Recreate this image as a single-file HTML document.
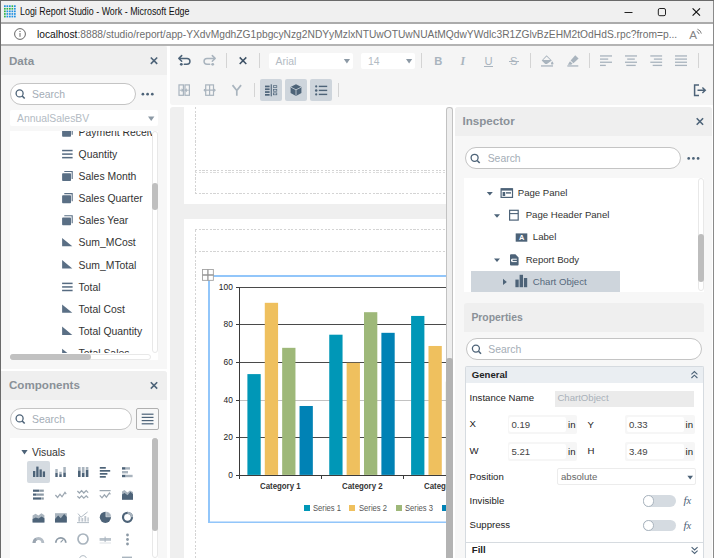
<!DOCTYPE html>
<html><head><meta charset="utf-8"><title>Logi Report Studio - Work</title>
<style>
*{box-sizing:border-box;margin:0;padding:0}
html,body{width:714px;height:558px;overflow:hidden;background:#fff;font-family:"Liberation Sans",Arial,sans-serif;font-size:10.4px;color:#333}
#win, #win div, #win svg, #win span.a{position:absolute}
#win{left:0;top:0;width:714px;height:558px;overflow:hidden;background:#fff}
.t{white-space:nowrap}
#win svg{overflow:visible;display:block}
.clip{overflow:hidden}
</style></head><body>
<div id="win">
<div style="left:0px;top:0px;width:714px;height:22px;background:#f0f0f0;"></div>
<div style="left:0px;top:22px;width:714px;height:2px;background:#ababab;"></div>
<div style="left:0px;top:24px;width:714px;height:20px;background:#fff;"></div>
<div style="left:0px;top:44px;width:714px;height:2px;background:#b4b4b4;"></div>
<svg style="left:0px;top:0px" width="20" height="22" viewBox="0 0 20 22"><rect x="4.00" y="5.30" width="1.7" height="1.7" fill="#1e8fe1"/><rect x="4.00" y="7.90" width="1.7" height="1.7" fill="#2cb34a"/><rect x="4.00" y="10.50" width="1.7" height="1.7" fill="#2cb34a"/><rect x="4.00" y="13.10" width="1.7" height="1.7" fill="#2cb34a"/><rect x="4.00" y="15.70" width="1.7" height="1.7" fill="#2cb34a"/><rect x="6.50" y="5.30" width="1.7" height="1.7" fill="#1e8fe1"/><rect x="6.50" y="7.90" width="1.7" height="1.7" fill="#2cb34a"/><rect x="6.50" y="10.50" width="1.7" height="1.7" fill="#1e8fe1"/><rect x="6.50" y="13.10" width="1.7" height="1.7" fill="#1e8fe1"/><rect x="6.50" y="15.70" width="1.7" height="1.7" fill="#1e8fe1"/><rect x="9.00" y="5.30" width="1.7" height="1.7" fill="#1e8fe1"/><rect x="9.00" y="7.90" width="1.7" height="1.7" fill="#2cb34a"/><rect x="9.00" y="10.50" width="1.7" height="1.7" fill="#1e8fe1"/><rect x="9.00" y="13.10" width="1.7" height="1.7" fill="#1e8fe1"/><rect x="9.00" y="15.70" width="1.7" height="1.7" fill="#1e8fe1"/><rect x="11.50" y="5.30" width="1.7" height="1.7" fill="#2cb34a"/><rect x="11.50" y="7.90" width="1.7" height="1.7" fill="#2cb34a"/><rect x="11.50" y="10.50" width="1.7" height="1.7" fill="#1e8fe1"/><rect x="11.50" y="13.10" width="1.7" height="1.7" fill="#1e8fe1"/><rect x="11.50" y="15.70" width="1.7" height="1.7" fill="#1e8fe1"/><rect x="14.00" y="5.30" width="1.7" height="1.7" fill="#1e8fe1"/><rect x="14.00" y="7.90" width="1.7" height="1.7" fill="#1e8fe1"/><rect x="14.00" y="10.50" width="1.7" height="1.7" fill="#1e8fe1"/><rect x="14.00" y="13.10" width="1.7" height="1.7" fill="#1e8fe1"/><rect x="14.00" y="15.70" width="1.7" height="1.7" fill="#1e8fe1"/></svg>
<div class="t" id="title" style="left:20px;top:5.24px;font-size:10px;line-height:13px;height:13px;color:#111;transform:scaleX(0.89);transform-origin:0 0;">Logi Report Studio - Work - Microsoft Edge</div>
<svg style="left:0px;top:0px" width="714" height="22" viewBox="0 0 714 22"><path d="M624.5 12.5h8" stroke="#222" stroke-width="1" fill="none"/><rect x="658.3" y="8.5" width="7.2" height="7.2" rx="1.5" fill="none" stroke="#222" stroke-width="1"/><path d="M692.6 8.3l7.4 7.4M700 8.3l-7.4 7.4" stroke="#111" stroke-width="1.15" fill="none"/></svg>
<svg style="left:0px;top:24px" width="40" height="20" viewBox="0 0 40 20"><circle cx="20" cy="10" r="5.4" fill="none" stroke="#555" stroke-width="0.9"/><rect x="19.55" y="9" width="0.9" height="3.8" fill="#555"/><rect x="19.5" y="6.9" width="1" height="1.1" fill="#555"/></svg>
<div class="t" id="url" style="left:37px;top:26.73px;font-size:10.6px;line-height:14px;height:14px;color:#6d6d6d;transform:scaleX(0.967);transform-origin:0 0;"><span style="color:#111">localhost</span>:8888/studio/report/app-YXdvMgdhZG1pbgcyNzg2NDYyMzlxNTUwOTUwNUAtMQdwYWdlc3R1ZGlvBzEHM2tOdHdS.rpc?from=p...</div>
<div class="t" style="left:689.3px;top:26.6px;font-size:11.6px;line-height:15px;color:#858585">A</div>
<svg style="left:0px;top:24px" width="714" height="20" viewBox="0 0 714 20"><path d="M696.71 7.38A3.6 3.6 0 0 1 699.12 10.05M697.42 5.19A5.9 5.9 0 0 1 701.37 9.57" fill="none" stroke="#808080" stroke-width="1"/></svg>
<div style="left:1px;top:46px;width:166px;height:323px;background:#f7f7f7;"></div>
<div style="left:1px;top:371.3px;width:166px;height:187px;background:#f7f7f7;border-radius:0 3px 0 0;"></div>
<div style="left:1px;top:46px;width:166px;height:28.5px;background:#efefef;border-radius:0 3px 0 0;"></div>
<div class="t" style="left:9px;top:52.58px;font-size:11.6px;line-height:15px;height:15px;color:#8a9198;font-weight:bold;">Data</div>
<svg style="left:0px;top:0px" width="714" height="558" viewBox="0 0 714 558"><path d="M150.8 57.5L157.2 63.900000000000006M157.2 57.5L150.8 63.900000000000006" stroke="#4d6378" stroke-width="1.6" fill="none"/></svg>
<div style="left:10px;top:83px;width:126px;height:22px;background:#fff;border:1px solid #c4c4c4;border-radius:11.0px;"></div>
<svg style="left:0px;top:0px" width="714" height="558" viewBox="0 0 714 558"><circle cx="19.6" cy="93.4" r="3.5" fill="none" stroke="#4d6378" stroke-width="1.3"/><path d="M22.2 96.0l2.5 2.6" stroke="#4d6378" stroke-width="1.5" fill="none"/></svg>
<div class="t" style="left:32px;top:87.90px;font-size:10.4px;line-height:14px;height:14px;color:#a4adb6;">Search</div>
<svg style="left:0px;top:0px" width="714" height="558" viewBox="0 0 714 558"><circle cx="142.9" cy="94.2" r="1.35" fill="#4d6378"/><circle cx="147.6" cy="94.2" r="1.35" fill="#4d6378"/><circle cx="152.3" cy="94.2" r="1.35" fill="#4d6378"/></svg>
<div style="left:10px;top:110px;width:148px;height:16px;background:#fff;border-radius:2px;"></div>
<div class="t" style="left:17px;top:112.00px;font-size:10.4px;line-height:14px;height:14px;color:#b3bbc3;">AnnualSalesBV</div>
<svg style="left:0px;top:0px" width="714" height="558" viewBox="0 0 714 558"><path d="M148 116.5h6.4l-3.2 4.6z" fill="#8c99a5"/></svg>
<div style="left:10px;top:131px;width:148px;height:229px;background:#fff;"></div>
<div class="clip" style="left:10px;top:131px;width:141.5px;height:222px">
<svg style="left:0px;top:0px" width="148" height="222" viewBox="0 0 148 222"><rect x="52.1" y="-2.14" width="8.9" height="7.9" rx="0.8" fill="#5a6f85"/><path d="M54.3 -3.84h7.9v7.6" fill="none" stroke="#5a6f85" stroke-width="1.1"/></svg>
<div class="t" style="left:68.6px;top:-5.34px;font-size:10.4px;line-height:14px;height:14px;color:#333;">Payment Received</div>
<svg style="left:0px;top:0px" width="148" height="222" viewBox="0 0 148 222"><rect x="52.1" y="18.80" width="10.5" height="1.5" fill="#566b81"/><rect x="52.1" y="22.35" width="10.5" height="1.5" fill="#566b81"/><rect x="52.1" y="25.90" width="10.5" height="1.5" fill="#566b81"/></svg>
<div class="t" style="left:68.6px;top:16.80px;font-size:10.4px;line-height:14px;height:14px;color:#333;">Quantity</div>
<svg style="left:0px;top:0px" width="148" height="222" viewBox="0 0 148 222"><rect x="52.1" y="42.14" width="8.9" height="7.9" rx="0.8" fill="#5a6f85"/><path d="M54.3 40.44h7.9v7.6" fill="none" stroke="#5a6f85" stroke-width="1.1"/></svg>
<div class="t" style="left:68.6px;top:38.94px;font-size:10.4px;line-height:14px;height:14px;color:#333;">Sales Month</div>
<svg style="left:0px;top:0px" width="148" height="222" viewBox="0 0 148 222"><rect x="52.1" y="64.28" width="8.9" height="7.9" rx="0.8" fill="#5a6f85"/><path d="M54.3 62.58h7.9v7.6" fill="none" stroke="#5a6f85" stroke-width="1.1"/></svg>
<div class="t" style="left:68.6px;top:61.08px;font-size:10.4px;line-height:14px;height:14px;color:#333;">Sales Quarter</div>
<svg style="left:0px;top:0px" width="148" height="222" viewBox="0 0 148 222"><rect x="52.1" y="86.42" width="8.9" height="7.9" rx="0.8" fill="#5a6f85"/><path d="M54.3 84.72h7.9v7.6" fill="none" stroke="#5a6f85" stroke-width="1.1"/></svg>
<div class="t" style="left:68.6px;top:83.22px;font-size:10.4px;line-height:14px;height:14px;color:#333;">Sales Year</div>
<svg style="left:0px;top:0px" width="148" height="222" viewBox="0 0 148 222"><path d="M52.1 106.96v8.4h10.2z" fill="#5a6f85"/></svg>
<div class="t" style="left:68.6px;top:105.36px;font-size:10.4px;line-height:14px;height:14px;color:#333;">Sum_MCost</div>
<svg style="left:0px;top:0px" width="148" height="222" viewBox="0 0 148 222"><path d="M52.1 129.10v8.4h10.2z" fill="#5a6f85"/></svg>
<div class="t" style="left:68.6px;top:127.50px;font-size:10.4px;line-height:14px;height:14px;color:#333;">Sum_MTotal</div>
<svg style="left:0px;top:0px" width="148" height="222" viewBox="0 0 148 222"><rect x="52.1" y="151.64" width="10.5" height="1.5" fill="#566b81"/><rect x="52.1" y="155.19" width="10.5" height="1.5" fill="#566b81"/><rect x="52.1" y="158.74" width="10.5" height="1.5" fill="#566b81"/></svg>
<div class="t" style="left:68.6px;top:149.64px;font-size:10.4px;line-height:14px;height:14px;color:#333;">Total</div>
<svg style="left:0px;top:0px" width="148" height="222" viewBox="0 0 148 222"><path d="M52.1 173.38v8.4h10.2z" fill="#5a6f85"/></svg>
<div class="t" style="left:68.6px;top:171.78px;font-size:10.4px;line-height:14px;height:14px;color:#333;">Total Cost</div>
<svg style="left:0px;top:0px" width="148" height="222" viewBox="0 0 148 222"><path d="M52.1 195.52v8.4h10.2z" fill="#5a6f85"/></svg>
<div class="t" style="left:68.6px;top:193.92px;font-size:10.4px;line-height:14px;height:14px;color:#333;">Total Quantity</div>
<svg style="left:0px;top:0px" width="148" height="222" viewBox="0 0 148 222"><path d="M52.1 217.66v8.4h10.2z" fill="#5a6f85"/></svg>
<div class="t" style="left:68.6px;top:216.06px;font-size:10.4px;line-height:14px;height:14px;color:#333;">Total Sales</div>
</div>
<div style="left:151.5px;top:131px;width:6.5px;height:221.5px;background:#fff;border:1px solid #e8e8e8;border-radius:3px;"></div>
<div style="left:151.5px;top:183px;width:6.5px;height:27px;background:#bfbfbf;border-radius:3px;"></div>
<div style="left:10px;top:353.5px;width:140.5px;height:6.5px;background:#fff;border:1px solid #e8e8e8;border-radius:3px;"></div>
<div style="left:10px;top:353.5px;width:80.5px;height:6.5px;background:#c1c1c1;border-radius:3px;"></div>
<div style="left:1px;top:371.3px;width:166px;height:28.7px;background:#efefef;border-radius:0 3px 0 0;"></div>
<div class="t" style="left:9px;top:377.08px;font-size:11.6px;line-height:15px;height:15px;color:#8a9198;font-weight:bold;">Components</div>
<svg style="left:0px;top:0px" width="714" height="558" viewBox="0 0 714 558"><path d="M150.8 382.2L157.2 388.59999999999997M157.2 382.2L150.8 388.59999999999997" stroke="#4d6378" stroke-width="1.6" fill="none"/></svg>
<div style="left:10px;top:408px;width:122px;height:22px;background:#fff;border:1px solid #c4c4c4;border-radius:11.0px;"></div>
<svg style="left:0px;top:0px" width="714" height="558" viewBox="0 0 714 558"><circle cx="19.6" cy="418.4" r="3.5" fill="none" stroke="#4d6378" stroke-width="1.3"/><path d="M22.2 421.0l2.5 2.6" stroke="#4d6378" stroke-width="1.5" fill="none"/></svg>
<div class="t" style="left:32px;top:412.90px;font-size:10.4px;line-height:14px;height:14px;color:#a4adb6;">Search</div>
<div style="left:136px;top:408px;width:22.5px;height:22px;background:#f8f8f8;border:1px solid #b0b0b0;border-radius:2px;"></div>
<svg style="left:0px;top:0px" width="714" height="558" viewBox="0 0 714 558"><rect x="141.7" y="413.6" width="11.8" height="1.2" fill="#4d6378"/><rect x="141.7" y="416.8" width="11.8" height="1.2" fill="#4d6378"/><rect x="141.7" y="420.0" width="11.8" height="1.2" fill="#4d6378"/><rect x="141.7" y="423.2" width="11.8" height="1.2" fill="#4d6378"/></svg>
<div style="left:10px;top:438px;width:148px;height:120px;background:#fff;"></div>
<div style="left:151.5px;top:438px;width:6.8px;height:120px;background:#fff;border:1px solid #e8e8e8;border-radius:3px;"></div>
<div style="left:151.5px;top:438px;width:6.8px;height:92.5px;background:#bdbdbd;border-radius:3px;"></div>
<svg style="left:0px;top:0px" width="714" height="558" viewBox="0 0 714 558"><path d="M21.4 450h6.2l-3.1 4.6z" fill="#4d6378"/></svg>
<div class="t" style="left:32px;top:446.00px;font-size:10.4px;line-height:14px;height:14px;color:#333;">Visuals</div>
<div style="left:27.3px;top:461px;width:22.3px;height:22px;background:#d5dbe1;border-radius:2px;"></div>
<svg style="left:0px;top:0px" width="714" height="558" viewBox="0 0 714 558"><g fill="#4d6378"><rect x="33" y="471" width="2.3" height="6"/><rect x="36.25" y="466.6" width="2.3" height="10.4"/><rect x="39.5" y="469.4" width="2.3" height="7.6"/><rect x="42.75" y="471.4" width="2.3" height="5.6"/></g></svg>
<svg style="left:0px;top:0px" width="714" height="558" viewBox="0 0 714 558"><g fill="#4d6378"><rect x="55.3" y="472.6" width="2.4" height="4.4"/><rect x="59.3" y="474.2" width="2.4" height="2.8"/><rect x="63.3" y="472.4" width="2.5" height="4.6"/></g><g fill="#a9b4be"><rect x="55.3" y="469" width="2.4" height="3.4"/><rect x="59.3" y="471.8" width="2.4" height="2.2"/><rect x="63.3" y="467" width="2.5" height="5.2"/></g></svg>
<svg style="left:0px;top:0px" width="714" height="558" viewBox="0 0 714 558"><g fill="#4d6378"><rect x="78" y="470.4" width="2.6" height="6.6"/><rect x="81.9" y="472.6" width="2.6" height="4.4"/><rect x="85.8" y="469.6" width="2.6" height="7.4"/></g><g fill="#a9b4be"><rect x="78" y="467" width="2.6" height="3.2"/><rect x="81.9" y="467" width="2.6" height="5.4"/><rect x="85.8" y="467" width="2.6" height="2.4"/></g></svg>
<svg style="left:0px;top:0px" width="714" height="558" viewBox="0 0 714 558"><g fill="#4d6378"><rect x="99.8" y="467" width="6" height="1.7"/><rect x="99.8" y="470" width="10.4" height="1.7"/><rect x="99.8" y="473" width="7.6" height="1.7"/><rect x="99.8" y="476" width="6" height="1.7"/></g></svg>
<svg style="left:0px;top:0px" width="714" height="558" viewBox="0 0 714 558"><g fill="#4d6378"><rect x="122" y="467.2" width="3.6" height="2.4"/><rect x="122" y="474.8" width="3.6" height="2.4"/></g><g fill="#a9b4be"><rect x="125.6" y="467.2" width="4.4" height="2.4"/><rect x="122" y="471" width="6" height="2.4"/><rect x="125.6" y="474.8" width="7" height="2.4"/></g></svg>
<svg style="left:0px;top:0px" width="714" height="558" viewBox="0 0 714 558"><g fill="#4d6378"><rect x="33" y="489.6" width="6.4" height="2.2"/><rect x="33" y="493.5" width="3.6" height="2.2"/><rect x="33" y="497.4" width="8" height="2.2"/></g><g fill="#8c99a5"><rect x="39.6" y="489.6" width="4.2" height="2.2"/><rect x="36.8" y="493.5" width="7" height="2.2"/><rect x="41.2" y="497.4" width="2.6" height="2.2"/></g></svg>
<svg style="left:0px;top:0px" width="714" height="558" viewBox="0 0 714 558"><path d="M55.4 495l2.2 2.4l2.4-3.2l2 2.6l3-4.4l1.2 1.6" fill="none" stroke="#9ca7b1" stroke-width="1.25"/></svg>
<svg style="left:0px;top:0px" width="714" height="558" viewBox="0 0 714 558"><path d="M77.4 491l2 2l2.2-2.4l2.2 2.4l2.4-2.4l2 2M77.4 496.2l2 2l2.2-2.4l2.2 2.4l2.4-2.4l2 2" fill="none" stroke="#9ca7b1" stroke-width="1.25"/></svg>
<svg style="left:0px;top:0px" width="714" height="558" viewBox="0 0 714 558"><path d="M99.6 490.6h11M99.8 495.4l2.2 2.4l2.4-3l2 2.4l3-4.2l1 1.4" fill="none" stroke="#9ca7b1" stroke-width="1.25"/></svg>
<svg style="left:0px;top:0px" width="714" height="558" viewBox="0 0 714 558"><path d="M122 491.6l2.4-1.6l3 2.4l2.6-2l3 1.6v7.6h-11z" fill="#a9b4be"/><path d="M122 494.4l2.6-1.4l3 2.2l2.8-3.4l2.6 2.4v5.6h-11z" fill="#4d6378"/></svg>
<svg style="left:0px;top:0px" width="714" height="558" viewBox="0 0 714 558"><path d="M32.6 515.4l3-1.6l2.8 1.8l3-2.4l3 2v7.2h-11.8z" fill="#a9b4be"/><path d="M32.6 519l3.2-1.6l2.8 1.2l3-2.2l2.8 1.8v4.2h-11.8z" fill="#4d6378"/></svg>
<svg style="left:0px;top:0px" width="714" height="558" viewBox="0 0 714 558"><rect x="55" y="513.2" width="11.8" height="9.2" fill="#a9b4be"/><path d="M55 519l3.2-3.4l2.6 2.6l3.4-4.2l2.6 3v5.4h-11.8z" fill="#4d6378"/></svg>
<svg style="left:0px;top:0px" width="714" height="558" viewBox="0 0 714 558"><g fill="#a9b4be" opacity="0.75"><rect x="78.4" y="516.6" width="1.8" height="5"/><rect x="81.4" y="518" width="1.8" height="3.6"/><rect x="84.4" y="516" width="1.8" height="5.6"/><rect x="87.4" y="517.4" width="1.4" height="4.2"/></g><path d="M77 522.6h12M78 513.6l3 3.6l3-2.4l3.6-2.8" fill="none" stroke="#a9b4be" stroke-width="0.9"/></svg>
<svg style="left:0px;top:0px" width="714" height="558" viewBox="0 0 714 558"><circle cx="105.4" cy="517.3" r="5.6" fill="#4d6378"/><path d="M105.9 516.8v-5.4a5.4 5.4 0 0 1 5.4 5.4z" fill="#a9b4be" stroke="#fff" stroke-width="0.5"/></svg>
<svg style="left:0px;top:0px" width="714" height="558" viewBox="0 0 714 558"><circle cx="127.5" cy="517.3" r="4.5" fill="none" stroke="#4d6378" stroke-width="2.2"/><path d="M127.5 512.8a4.5 4.5 0 0 1 4.5 4.5" fill="none" stroke="#a9b4be" stroke-width="2.2"/></svg>
<svg style="left:0px;top:0px" width="714" height="558" viewBox="0 0 714 558"><path d="M34.05 542.9a4.4 4.4 0 0 1 8.8 0" fill="none" stroke="#b4bdc6" stroke-width="2.9"/><path d="M34.05 542.9a4.4 4.4 0 0 1 2.2-3.8" fill="none" stroke="#9aa5b0" stroke-width="2.9"/></svg>
<svg style="left:0px;top:0px" width="714" height="558" viewBox="0 0 714 558"><path d="M55.8 542.8a5 5 0 0 1 10 0" fill="none" stroke="#8c99a5" stroke-width="1.8"/><path d="M60.6 542.4l2.8-3" fill="none" stroke="#8c99a5" stroke-width="1.1"/></svg>
<svg style="left:0px;top:0px" width="714" height="558" viewBox="0 0 714 558"><circle cx="83" cy="539" r="5" fill="none" stroke="#a9b4be" stroke-width="1.7"/></svg>
<svg style="left:0px;top:0px" width="714" height="558" viewBox="0 0 714 558"><g fill="#a9b4be"><rect x="99.6" y="538" width="11.4" height="2.8" opacity="0.8"/><rect x="104.6" y="536.6" width="1" height="5.4"/><rect x="99.6" y="542.6" width="11.4" height="0.8" opacity="0.5"/></g></svg>
<svg style="left:0px;top:0px" width="714" height="558" viewBox="0 0 714 558"><g fill="#8c99a5"><circle cx="127.5" cy="535" r="1.4"/><circle cx="127.5" cy="539.5" r="1.4"/><circle cx="127.5" cy="544" r="1.4"/></g></svg>
<svg style="left:0px;top:0px" width="714" height="558" viewBox="0 0 714 558"><path d="M79.6 558a3.6 3.6 0 0 1 6.8 0" fill="none" stroke="#a9b4be" stroke-width="0.9"/><rect x="122" y="556.6" width="10" height="1.4" fill="#a9b4be"/></svg>
<div style="left:170px;top:46px;width:543px;height:59px;background:#f5f5f5;border-radius:0 0 0 3px;"></div>
<svg style="left:0px;top:0px" width="714" height="558" viewBox="0 0 714 558"><g transform="translate(178.4,55.7)"><path d="M3.3 -0.1L0.5 2.7L3.3 5.5" fill="none" stroke="#4d6378" stroke-width="1.5" stroke-linecap="round" stroke-linejoin="round"/><path d="M0.9 2.7H8.6A2.95 2.95 0 0 1 8.6 8.6H5.9" fill="none" stroke="#4d6378" stroke-width="1.5" stroke-linecap="round"/><circle cx="2.9" cy="8.6" r="1.4" fill="#4d6378"/></g></svg>
<svg style="left:0px;top:0px" width="714" height="558" viewBox="0 0 714 558"><g transform="translate(203.7,55.7) translate(11.9,0) scale(-1,1)"><path d="M3.3 -0.1L0.5 2.7L3.3 5.5" fill="none" stroke="#a9b4be" stroke-width="1.5" stroke-linecap="round" stroke-linejoin="round"/><path d="M0.9 2.7H8.6A2.95 2.95 0 0 1 8.6 8.6H5.9" fill="none" stroke="#a9b4be" stroke-width="1.5" stroke-linecap="round"/><circle cx="2.9" cy="8.6" r="1.4" fill="#a9b4be"/></g></svg>
<div style="left:225.8px;top:53px;width:1px;height:15px;background:#d4d4d4;"></div>
<svg style="left:0px;top:0px" width="714" height="558" viewBox="0 0 714 558"><path d="M239.7 57.400000000000006L246.3 64.0M246.3 57.400000000000006L239.7 64.0" stroke="#3e5266" stroke-width="1.5" fill="none"/></svg>
<div style="left:258.7px;top:53px;width:1px;height:15px;background:#d4d4d4;"></div>
<div style="left:269px;top:52.7px;width:84px;height:16.3px;background:#fff;border-radius:2px;"></div>
<div class="t" style="left:275.5px;top:54.70px;font-size:10.4px;line-height:14px;height:14px;color:#b3bbc3;">Arial</div>
<svg style="left:0px;top:0px" width="714" height="558" viewBox="0 0 714 558"><path d="M343.8 59h6.2l-3.1 4.6z" fill="#8c99a5"/></svg>
<div style="left:361px;top:52.7px;width:54.2px;height:16.3px;background:#fff;border-radius:2px;"></div>
<div class="t" style="left:368px;top:54.70px;font-size:10.4px;line-height:14px;height:14px;color:#b3bbc3;">14</div>
<svg style="left:0px;top:0px" width="714" height="558" viewBox="0 0 714 558"><path d="M406 59h6.2l-3.1 4.6z" fill="#8c99a5"/></svg>
<div style="left:421.3px;top:53px;width:1px;height:15px;background:#d4d4d4;"></div>
<div class="t" style="left:434.3px;top:53.92px;font-size:11.2px;line-height:15px;height:15px;color:#a9b4be;font-weight:bold;">B</div>
<div class="t" style="left:460.6px;top:53.71px;font-size:11.8px;line-height:15px;height:15px;color:#a9b4be;font-weight:bold;font-family:'Liberation Serif',serif;font-style:italic;">I</div>
<div class="t" style="left:484.4px;top:53.92px;font-size:11.2px;line-height:15px;height:15px;color:#a9b4be;">U</div>
<div style="left:484.3px;top:66px;width:9px;height:1px;background:#a9b4be;"></div>
<div class="t" style="left:510px;top:53.92px;font-size:11.2px;line-height:15px;height:15px;color:#a9b4be;">S</div>
<div style="left:508.8px;top:60.6px;width:10.2px;height:1px;background:#a9b4be;"></div>
<div style="left:530.0px;top:53px;width:1px;height:15px;background:#d4d4d4;"></div>
<svg style="left:0px;top:0px" width="714" height="558" viewBox="0 0 714 558"><g fill="#a9b4be"><path d="M546.6 55.2l5.2 5.2l-4.9 3.6h-1.6l-3.6-3.6z"/><path d="M546.6 56.6l-3.5 3.5h7z" fill="#f5f5f5"/><path d="M552.2 61.2c0.8 1 1.2 1.7 1.2 2.2a1.2 1.2 0 0 1-2.4 0c0-0.5 0.4-1.2 1.2-2.2z"/><rect x="541" y="65.3" width="12" height="1.3"/></g></svg>
<svg style="left:0px;top:0px" width="714" height="558" viewBox="0 0 714 558"><g fill="#a9b4be"><path d="M575.2 55.2l3.4 3.4l-5.2 4.7l-2.8-2.8z"/><path d="M570 61.2l2.6 2.6l-1.6 1h-3.2z"/><rect x="567.3" y="65.3" width="11" height="1.3"/></g></svg>
<div style="left:588.8px;top:53px;width:1px;height:15px;background:#d4d4d4;"></div>
<svg style="left:0px;top:0px" width="714" height="558" viewBox="0 0 714 558"><rect x="600" y="55.30" width="12" height="1.3" fill="#a9b4be"/><rect x="600" y="58.45" width="8.2" height="1.3" fill="#a9b4be"/><rect x="600" y="61.60" width="12" height="1.3" fill="#a9b4be"/><rect x="600" y="64.75" width="5.8" height="1.3" fill="#a9b4be"/></svg>
<svg style="left:0px;top:0px" width="714" height="558" viewBox="0 0 714 558"><rect x="625" y="55.30" width="12" height="1.3" fill="#a9b4be"/><rect x="627.2" y="58.45" width="7.6" height="1.3" fill="#a9b4be"/><rect x="625" y="61.60" width="12" height="1.3" fill="#a9b4be"/><rect x="626.3" y="64.75" width="9.4" height="1.3" fill="#a9b4be"/></svg>
<svg style="left:0px;top:0px" width="714" height="558" viewBox="0 0 714 558"><rect x="650.3" y="55.30" width="11.8" height="1.3" fill="#a9b4be"/><rect x="653.9" y="58.45" width="8.2" height="1.3" fill="#a9b4be"/><rect x="650.3" y="61.60" width="11.8" height="1.3" fill="#a9b4be"/><rect x="652.6999999999999" y="64.75" width="9.4" height="1.3" fill="#a9b4be"/></svg>
<svg style="left:0px;top:0px" width="714" height="558" viewBox="0 0 714 558"><rect x="675" y="55.30" width="12" height="1.3" fill="#a9b4be"/><rect x="675" y="58.45" width="12" height="1.3" fill="#a9b4be"/><rect x="675" y="61.60" width="12" height="1.3" fill="#a9b4be"/><rect x="675" y="64.75" width="12" height="1.3" fill="#a9b4be"/></svg>
<div style="left:697.7px;top:53px;width:1px;height:15px;background:#d4d4d4;"></div>
<svg style="left:0px;top:0px" width="714" height="558" viewBox="0 0 714 558"><g fill="none" stroke="#a9b4be" stroke-width="1.2"><rect x="179" y="84.9" width="4.4" height="10.4"/><rect x="185" y="84.9" width="4.4" height="10.4"/></g><path d="M179.6 90.2h3M188.8 90.2h-3" stroke="#a9b4be" stroke-width="1" fill="none"/><path d="M181.6 88.2l2.4 2l-2.4 2zM186.8 88.2l-2.4 2l2.4 2z" fill="#a9b4be"/></svg>
<svg style="left:0px;top:0px" width="714" height="558" viewBox="0 0 714 558"><g fill="none" stroke="#a9b4be" stroke-width="1.2"><rect x="205.7" y="84.9" width="7.8" height="10.4"/><path d="M209.6 84.9v10.4M204 90.2h11.2"/><path d="M205.6 88.6l-1.8 1.6l1.8 1.6M213.6 88.6l1.8 1.6l-1.8 1.6" stroke-width="1"/></g></svg>
<svg style="left:0px;top:0px" width="714" height="558" viewBox="0 0 714 558"><path d="M232.5 85.1l4.3 5.4v5.2M241.1 85.1l-4.3 5.4" fill="none" stroke="#a9b4be" stroke-width="1.7"/></svg>
<div style="left:253.9px;top:83.3px;width:1px;height:14.0px;background:#d4d4d4;"></div>
<div style="left:260.2px;top:79.3px;width:21.8px;height:21.4px;background:#ced5dc;border-radius:2px;"></div>
<div style="left:285px;top:79.3px;width:21.8px;height:21.4px;background:#ced5dc;border-radius:2px;"></div>
<div style="left:310px;top:79.3px;width:21.8px;height:21.4px;background:#ced5dc;border-radius:2px;"></div>
<svg style="left:0px;top:0px" width="714" height="558" viewBox="0 0 714 558"><g fill="#4d6378"><rect x="265" y="85.6" width="4.6" height="1.7"/><rect x="265" y="88.4" width="4.6" height="1.7"/><rect x="265" y="91.2" width="4.6" height="1.7"/><rect x="265" y="94" width="4.6" height="1.7"/><rect x="270.7" y="84.3" width="1.1" height="12"/></g><g fill="none" stroke="#4d6378" stroke-width="0.7"><rect x="273.6" y="85.7" width="3.2" height="1.9"/><rect x="273.6" y="89.3" width="3.2" height="1.9"/><rect x="273.6" y="92.9" width="3.2" height="1.9"/></g></svg>
<svg style="left:0px;top:0px" width="714" height="558" viewBox="0 0 714 558"><path d="M296 84.3l5.4 2.7v5.9l-5.4 3l-5.4-3v-5.9z" fill="#4d6378"/><path d="M290.9 87.2l5.1 2.6l5.1-2.6M296 89.8v5.8" fill="none" stroke="#ced5dc" stroke-width="0.8"/></svg>
<svg style="left:0px;top:0px" width="714" height="558" viewBox="0 0 714 558"><g fill="#4d6378"><circle cx="316.2" cy="86.4" r="1.1"/><rect x="318.8" y="85.7" width="8.4" height="1.4"/><circle cx="316.2" cy="90.4" r="1.25"/><rect x="318.8" y="89.7" width="8.4" height="1.4"/><circle cx="316.2" cy="94.4" r="1.1"/><rect x="318.8" y="93.7" width="8.4" height="1.4"/></g></svg>
<div style="left:338.0px;top:83.3px;width:1px;height:14.0px;background:#d4d4d4;"></div>
<svg style="left:0px;top:0px" width="714" height="558" viewBox="0 0 714 558"><path d="M699 85h-4.4v10.4h4.4" fill="none" stroke="#4d6378" stroke-width="1.5"/><path d="M697.5 90.2h7.6M702.4 87.4l2.9 2.8l-2.9 2.8" fill="none" stroke="#4d6378" stroke-width="1.4"/></svg>
<div style="left:170px;top:106.5px;width:276.5px;height:452px;background:#efefef;border-radius:3px 0 0 0;"></div>
<div style="left:184px;top:106.5px;width:262.5px;height:97.5px;background:#fff;"></div>
<div style="left:184px;top:218.7px;width:262.5px;height:340px;background:#fff;"></div>
<div style="left:194.9px;top:106.5px;width:1px;height:87.0px;background:repeating-linear-gradient(180deg,#d4d4d4 0,#d4d4d4 2.2px,transparent 2.2px,transparent 3.7px);"></div>
<div style="left:195.4px;top:169.9px;width:250.6px;height:1px;background:repeating-linear-gradient(90deg,#d4d4d4 0,#d4d4d4 2.2px,transparent 2.2px,transparent 3.7px);"></div>
<div style="left:195.4px;top:171.9px;width:250.6px;height:1px;background:repeating-linear-gradient(90deg,#dcdcdc 0,#dcdcdc 2.2px,transparent 2.2px,transparent 3.7px);"></div>
<div style="left:195.4px;top:192.9px;width:250.6px;height:1px;background:repeating-linear-gradient(90deg,#d4d4d4 0,#d4d4d4 2.2px,transparent 2.2px,transparent 3.7px);"></div>
<div style="left:194.9px;top:229.6px;width:1px;height:328.4px;background:repeating-linear-gradient(180deg,#d4d4d4 0,#d4d4d4 2.2px,transparent 2.2px,transparent 3.7px);"></div>
<div style="left:195.4px;top:229.1px;width:250.6px;height:1px;background:repeating-linear-gradient(90deg,#d4d4d4 0,#d4d4d4 2.2px,transparent 2.2px,transparent 3.7px);"></div>
<div style="left:195.4px;top:251.0px;width:250.6px;height:1px;background:repeating-linear-gradient(90deg,#d4d4d4 0,#d4d4d4 2.2px,transparent 2.2px,transparent 3.7px);"></div>
<div class="clip" style="left:184px;top:218.7px;width:262.2px;height:340px">
<div style="left:24px;top:56.3px;width:300px;height:2px;background:#92c6fa;"></div>
<div style="left:24px;top:56.3px;width:2px;height:248px;background:#92c6fa;"></div>
<div style="left:24px;top:303.3px;width:300px;height:1px;background:#92c6fa;"></div>
<div style="left:26px;top:302.3px;width:300px;height:1px;background:#c6e0fc;"></div>
<svg style="left:18.30000000000001px;top:50.8px" width="12" height="12"><rect x="0.45" y="0.45" width="10.9" height="10.9" fill="#fff" stroke="#a2a2a2" stroke-width="0.9"/><path d="M5.9 0.5v11M0.5 6h11" stroke="#969696" stroke-width="1.3"/></svg>
<div style="left:55.5px;top:68.3px;width:260px;height:1px;background:#4a4a4a;"></div>
<div style="left:52px;top:68.3px;width:3.4px;height:1px;background:#3a3a3a;"></div>
<div style="left:55.5px;top:105.3px;width:260px;height:1px;background:#4a4a4a;"></div>
<div style="left:52px;top:105.3px;width:3.4px;height:1px;background:#3a3a3a;"></div>
<div style="left:55.5px;top:143.3px;width:260px;height:1px;background:#4a4a4a;"></div>
<div style="left:52px;top:143.3px;width:3.4px;height:1px;background:#3a3a3a;"></div>
<div style="left:55.5px;top:181.3px;width:260px;height:1px;background:#c2c2c2;"></div>
<div style="left:52px;top:181.3px;width:3.4px;height:1px;background:#3a3a3a;"></div>
<div style="left:55.5px;top:218.3px;width:260px;height:1px;background:#4a4a4a;"></div>
<div style="left:52px;top:218.3px;width:3.4px;height:1px;background:#3a3a3a;"></div>
<div style="left:55.5px;top:256.3px;width:260px;height:1px;background:#3a3a3a;"></div>
<div style="left:52px;top:256.3px;width:3.4px;height:1px;background:#3a3a3a;"></div>
<div style="left:55.0px;top:68.3px;width:1px;height:191.8px;background:#3a3a3a;"></div>
<div style="left:137.0px;top:256.4px;width:1px;height:3.7px;background:#3a3a3a;"></div>
<div style="left:219.2px;top:256.4px;width:1px;height:3.7px;background:#3a3a3a;"></div>
<svg style="left:0;top:0" width="400" height="340"><rect x="63.40" y="155.10" width="13.3" height="100.80" fill="#0097b7"/><rect x="80.78" y="83.81" width="13.3" height="172.09" fill="#efc05e"/><rect x="98.16" y="128.83" width="13.3" height="127.07" fill="#9eb879"/><rect x="115.54" y="186.99" width="13.3" height="68.91" fill="#0082b5"/><rect x="145.25" y="115.70" width="13.3" height="140.20" fill="#0097b7"/><rect x="162.63" y="143.84" width="13.3" height="112.06" fill="#efc05e"/><rect x="180.01" y="93.19" width="13.3" height="162.71" fill="#9eb879"/><rect x="197.39" y="113.82" width="13.3" height="142.08" fill="#0082b5"/><rect x="227.10" y="96.94" width="13.3" height="158.96" fill="#0097b7"/><rect x="244.48" y="126.96" width="13.3" height="128.94" fill="#efc05e"/><rect x="261.86" y="162.60" width="13.3" height="93.30" fill="#9eb879"/><rect x="279.24" y="181.36" width="13.3" height="74.54" fill="#0082b5"/></svg>
<div class="t" style="left:8.80px;width:40px;text-align:right;top:63.69px;font-size:8.4px;line-height:11px;height:11px;color:#222;">100</div>
<div class="t" style="left:8.80px;width:40px;text-align:right;top:100.69px;font-size:8.4px;line-height:11px;height:11px;color:#222;">80</div>
<div class="t" style="left:8.80px;width:40px;text-align:right;top:138.69px;font-size:8.4px;line-height:11px;height:11px;color:#222;">60</div>
<div class="t" style="left:8.80px;width:40px;text-align:right;top:176.69px;font-size:8.4px;line-height:11px;height:11px;color:#222;">40</div>
<div class="t" style="left:8.80px;width:40px;text-align:right;top:213.69px;font-size:8.4px;line-height:11px;height:11px;color:#222;">20</div>
<div class="t" style="left:8.80px;width:40px;text-align:right;top:251.69px;font-size:8.4px;line-height:11px;height:11px;color:#222;">0</div>
<div class="t" id="cat1" style="left:76.30px;top:262.42px;font-size:8.6px;line-height:11px;height:11px;color:#333;font-weight:bold;transform:scaleX(0.914);transform-origin:0 0;">Category 1</div>
<div class="t" id="cat2" style="left:157.60px;top:262.42px;font-size:8.6px;line-height:11px;height:11px;color:#333;font-weight:bold;transform:scaleX(0.914);transform-origin:0 0;">Category 2</div>
<div class="t" id="cat3" style="left:240.00px;top:262.42px;font-size:8.6px;line-height:11px;height:11px;color:#333;font-weight:bold;transform:scaleX(0.914);transform-origin:0 0;">Category 3</div>
<div style="left:119.8px;top:285.9px;width:6.1px;height:6.3px;background:#0097b7;"></div>
<div class="t" id="ser1" style="left:128.60px;top:284.52px;font-size:8.6px;line-height:11px;height:11px;color:#555;transform:scaleX(0.888);transform-origin:0 0;">Series 1</div>
<div style="left:165.4px;top:285.9px;width:6.1px;height:6.3px;background:#efc05e;"></div>
<div class="t" id="ser2" style="left:174.80px;top:284.52px;font-size:8.6px;line-height:11px;height:11px;color:#555;transform:scaleX(0.888);transform-origin:0 0;">Series 2</div>
<div style="left:211.5px;top:285.9px;width:6.1px;height:6.3px;background:#9eb879;"></div>
<div class="t" id="ser3" style="left:220.70px;top:284.52px;font-size:8.6px;line-height:11px;height:11px;color:#555;transform:scaleX(0.888);transform-origin:0 0;">Series 3</div>
<div style="left:257.6px;top:285.9px;width:6.1px;height:6.3px;background:#0082b5;"></div>
<div class="t" id="ser4" style="left:267.00px;top:284.52px;font-size:8.6px;line-height:11px;height:11px;color:#555;transform:scaleX(0.888);transform-origin:0 0;">Series 4</div>
</div>
<div style="left:446.2px;top:106.5px;width:6.4px;height:452px;background:#eeeeee;border:1px solid #c2c2c2;border-bottom:0;border-radius:3px 3px 0 0;"></div>
<div style="left:446.4px;top:358px;width:6.2px;height:200px;background:#b3b3b3;border-radius:3px 3px 0 0;"></div>
<div style="left:455px;top:106.5px;width:257px;height:452px;background:#f7f7f7;border-radius:3px 3px 0 0;"></div>
<div style="left:455px;top:106.5px;width:257px;height:29px;background:#efefef;border-radius:3px 3px 0 0;"></div>
<div class="t" style="left:462.5px;top:112.98px;font-size:11.6px;line-height:15px;height:15px;color:#8a9198;font-weight:bold;">Inspector</div>
<svg style="left:0px;top:0px" width="714" height="558" viewBox="0 0 714 558"><path d="M696.6999999999999 118.3L703.1 124.7M703.1 118.3L696.6999999999999 124.7" stroke="#4d6378" stroke-width="1.6" fill="none"/></svg>
<div style="left:465px;top:147.4px;width:216px;height:22px;background:#fff;border:1px solid #c4c4c4;border-radius:11.0px;"></div>
<svg style="left:0px;top:0px" width="714" height="558" viewBox="0 0 714 558"><circle cx="474.6" cy="157.8" r="3.5" fill="none" stroke="#4d6378" stroke-width="1.3"/><path d="M477.2 160.4l2.5 2.6" stroke="#4d6378" stroke-width="1.5" fill="none"/></svg>
<div class="t" style="left:487.7px;top:152.30px;font-size:10.4px;line-height:14px;height:14px;color:#a4adb6;">Search</div>
<svg style="left:0px;top:0px" width="714" height="558" viewBox="0 0 714 558"><circle cx="688.6999999999999" cy="158.4" r="1.35" fill="#4d6378"/><circle cx="693.4" cy="158.4" r="1.35" fill="#4d6378"/><circle cx="698.0999999999999" cy="158.4" r="1.35" fill="#4d6378"/></svg>
<div style="left:463.7px;top:177.6px;width:240.3px;height:114px;background:#fff;"></div>
<svg style="left:0px;top:0px" width="714" height="558" viewBox="0 0 714 558"><path d="M486.8 192.0h6l-3 3.6z" fill="#4d6378"/></svg>
<svg style="left:0px;top:0px" width="714" height="558" viewBox="0 0 714 558"><rect x="501.1" y="188.8" width="11.4" height="8.6" fill="none" stroke="#4d6378" stroke-width="1.2"/><rect x="501.1" y="188.4" width="11.4" height="2.2" fill="#4d6378"/><rect x="502.6" y="192" width="2.6" height="4" fill="#4d6378"/><rect x="506" y="192.2" width="5" height="1.4" fill="#4d6378"/></svg>
<div class="t" style="left:517.8px;top:187.17px;font-size:9.6px;line-height:12px;height:12px;color:#333;">Page Panel</div>
<svg style="left:0px;top:0px" width="714" height="558" viewBox="0 0 714 558"><path d="M494 214.15h6l-3 3.6z" fill="#4d6378"/></svg>
<svg style="left:0px;top:0px" width="714" height="558" viewBox="0 0 714 558"><rect x="509.6" y="210.3" width="8.6" height="9.8" fill="none" stroke="#4d6378" stroke-width="1.2"/><path d="M509.6 213.6h8.6" stroke="#4d6378" stroke-width="1.1"/></svg>
<div class="t" style="left:525.7px;top:209.32px;font-size:9.6px;line-height:12px;height:12px;color:#333;">Page Header Panel</div>
<svg style="left:0px;top:0px" width="714" height="558" viewBox="0 0 714 558"><rect x="515.7" y="233.4" width="11.6" height="8.3" fill="#4d6378"/></svg>
<div class="t" style="left:519.0px;top:233.24px;font-size:7.4px;line-height:10px;height:10px;color:#fff;font-weight:bold;">A</div>
<div class="t" style="left:532.8px;top:231.47px;font-size:9.6px;line-height:12px;height:12px;color:#333;">Label</div>
<svg style="left:0px;top:0px" width="714" height="558" viewBox="0 0 714 558"><path d="M494 258.45h6l-3 3.6z" fill="#4d6378"/></svg>
<svg style="left:0px;top:0px" width="714" height="558" viewBox="0 0 714 558"><path d="M510 255.2a1 1 0 0 1 1-1h4.4l3.2 3.2v7.2a1 1 0 0 1-1 1h-6.6a1 1 0 0 1-1-1z" fill="#4d6378"/><path d="M511.8 259.2h5M511.8 261.6h5" stroke="#fff" stroke-width="1"/><path d="M511.8 259.2v2.4" stroke="#fff" stroke-width="1.6"/></svg>
<div class="t" style="left:525.7px;top:253.62px;font-size:9.6px;line-height:12px;height:12px;color:#333;">Report Body</div>
<div style="left:471px;top:271.2px;width:148.6px;height:20.4px;background:#ced5dc;"></div>
<svg style="left:0px;top:0px" width="714" height="558" viewBox="0 0 714 558"><path d="M503.0 278.79999999999995v6.2l3.8-3.1z" fill="#4d6378"/></svg>
<svg style="left:0px;top:0px" width="714" height="558" viewBox="0 0 714 558"><g fill="#4d6378"><rect x="515.4" y="279.6" width="3.3" height="7.6"/><rect x="519.6" y="274.8" width="3.4" height="12.4"/><rect x="523.9" y="278" width="3.3" height="9.2"/></g></svg>
<div class="t" style="left:532.8px;top:275.77px;font-size:9.6px;line-height:12px;height:12px;color:#55687b;">Chart Object</div>
<div style="left:697.6px;top:177.6px;width:6.4px;height:113.6px;background:#fff;border:1px solid #e8e8e8;border-radius:3px;"></div>
<div style="left:697.6px;top:234px;width:6.4px;height:47.5px;background:#bdbdbd;border-radius:3px;"></div>
<div style="left:463.7px;top:302.7px;width:240.5px;height:29.3px;background:#efefef;border-radius:3px 3px 0 0;"></div>
<div class="t" style="left:471.4px;top:311.40px;font-size:10.4px;line-height:14px;height:14px;color:#8a9198;font-weight:bold;">Properties</div>
<div style="left:466.3px;top:338.2px;width:235.6px;height:22px;background:#fff;border:1px solid #c4c4c4;border-radius:11.0px;"></div>
<svg style="left:0px;top:0px" width="714" height="558" viewBox="0 0 714 558"><circle cx="475.90000000000003" cy="348.59999999999997" r="3.5" fill="none" stroke="#4d6378" stroke-width="1.3"/><path d="M478.5 351.2l2.5 2.6" stroke="#4d6378" stroke-width="1.5" fill="none"/></svg>
<div class="t" style="left:488.3px;top:343.10px;font-size:10.4px;line-height:14px;height:14px;color:#a4adb6;">Search</div>
<div style="left:464.5px;top:366.4px;width:239.5px;height:192px;background:#fff;border:1px solid #d6dbe0;border-bottom:0;border-radius:2px 2px 0 0;"></div>
<div style="left:465.5px;top:367.4px;width:237.5px;height:15.6px;background:#eaeef2;"></div>
<div class="t" style="left:471.8px;top:369.47px;font-size:9.6px;line-height:12px;height:12px;color:#222;font-weight:bold;">General</div>
<svg style="left:0px;top:0px" width="714" height="558" viewBox="0 0 714 558"><path d="M691.4 374.4l3-2.8l3 2.8M691.4 378l3-2.8l3 2.8" fill="none" stroke="#4d6378" stroke-width="1.1"/></svg>
<div class="t" style="left:469.6px;top:392.27px;font-size:9.6px;line-height:12px;height:12px;color:#222;">Instance Name</div>
<div style="left:555.2px;top:391px;width:139px;height:16px;background:#ebebeb;"></div>
<div class="t" style="left:557.4px;top:392.27px;font-size:9.6px;line-height:12px;height:12px;color:#a9b1b9;">ChartObject</div>
<div class="t" style="left:469.6px;top:417.87px;font-size:9.6px;line-height:12px;height:12px;color:#222;">X</div>
<div style="left:507.5px;top:415px;width:69.2px;height:18.8px;background:#f6f6f6;border-radius:2px;"></div>
<div style="left:509.3px;top:416.8px;width:57.2px;height:15.2px;background:#fff;border-radius:2px;"></div>
<div class="t" style="left:511.5px;top:419.47px;font-size:9.6px;line-height:12px;height:12px;color:#444;">0.19</div>
<div class="t" style="left:568px;top:419.47px;font-size:9.6px;line-height:12px;height:12px;color:#222;">in</div>
<div class="t" style="left:587.6px;top:418.87px;font-size:9.6px;line-height:12px;height:12px;color:#222;">Y</div>
<div style="left:625px;top:415px;width:70px;height:18.8px;background:#f6f6f6;border-radius:2px;"></div>
<div style="left:626.8px;top:416.8px;width:57.4px;height:15.2px;background:#fff;border-radius:2px;"></div>
<div class="t" style="left:629px;top:419.47px;font-size:9.6px;line-height:12px;height:12px;color:#444;">0.33</div>
<div class="t" style="left:685.6px;top:419.47px;font-size:9.6px;line-height:12px;height:12px;color:#222;">in</div>
<div class="t" style="left:469.6px;top:444.87px;font-size:9.6px;line-height:12px;height:12px;color:#222;">W</div>
<div style="left:507.5px;top:442px;width:69.2px;height:18.8px;background:#f6f6f6;border-radius:2px;"></div>
<div style="left:509.3px;top:443.8px;width:57.2px;height:15.2px;background:#fff;border-radius:2px;"></div>
<div class="t" style="left:511.5px;top:446.47px;font-size:9.6px;line-height:12px;height:12px;color:#444;">5.21</div>
<div class="t" style="left:568px;top:446.47px;font-size:9.6px;line-height:12px;height:12px;color:#222;">in</div>
<div class="t" style="left:587.6px;top:445.47px;font-size:9.6px;line-height:12px;height:12px;color:#222;">H</div>
<div style="left:625px;top:442px;width:70px;height:18.8px;background:#f6f6f6;border-radius:2px;"></div>
<div style="left:626.8px;top:443.8px;width:57.4px;height:15.2px;background:#fff;border-radius:2px;"></div>
<div class="t" style="left:629px;top:446.47px;font-size:9.6px;line-height:12px;height:12px;color:#444;">3.49</div>
<div class="t" style="left:685.6px;top:446.47px;font-size:9.6px;line-height:12px;height:12px;color:#222;">in</div>
<div class="t" style="left:469.6px;top:471.07px;font-size:9.6px;line-height:12px;height:12px;color:#222;">Position</div>
<div style="left:556.5px;top:467.8px;width:139px;height:17.2px;background:#fff;border:1px solid #ececec;border-radius:2px;"></div>
<div class="t" style="left:561px;top:471.07px;font-size:9.6px;line-height:12px;height:12px;color:#666;">absolute</div>
<svg style="left:0px;top:0px" width="714" height="558" viewBox="0 0 714 558"><path d="M687.4 475.7h5.6l-2.8 3.7z" fill="#4d6378"/></svg>
<div class="t" style="left:469.6px;top:494.87px;font-size:9.6px;line-height:12px;height:12px;color:#222;">Invisible</div>
<div style="left:643.2px;top:495.1px;width:32.8px;height:11.7px;background:#d5dbe1;border-radius:6px;"></div>
<div style="left:643.2px;top:495.1px;width:11.3px;height:11.7px;background:#fff;border:1px solid #a9b4be;border-radius:6px;"></div>
<div class="t" style="left:683.4px;top:493.05px;font-size:11.4px;line-height:15px;height:15px;color:#4d6378;font-family:'Liberation Serif',serif;font-style:italic;">f<span style="font-size:10.6px">x</span></div>
<div class="t" style="left:469.6px;top:519.27px;font-size:9.6px;line-height:12px;height:12px;color:#222;">Suppress</div>
<div style="left:643.2px;top:519.6px;width:32.8px;height:11.7px;background:#d5dbe1;border-radius:6px;"></div>
<div style="left:643.2px;top:519.6px;width:11.3px;height:11.7px;background:#fff;border:1px solid #a9b4be;border-radius:6px;"></div>
<div class="t" style="left:683.4px;top:517.55px;font-size:11.4px;line-height:15px;height:15px;color:#4d6378;font-family:'Liberation Serif',serif;font-style:italic;">f<span style="font-size:10.6px">x</span></div>
<div style="left:465.5px;top:541.6px;width:237.5px;height:1px;background:#d6dbe0;"></div>
<div class="t" style="left:471.8px;top:544.47px;font-size:9.6px;line-height:12px;height:12px;color:#222;font-weight:bold;">Fill</div>
<svg style="left:0px;top:0px" width="714" height="558" viewBox="0 0 714 558"><path d="M691.6 547.2l3 2.8l3-2.8M691.6 550.6l3 2.8l3-2.8" fill="none" stroke="#4d6378" stroke-width="1.1"/></svg>
<div style="left:0px;top:0px;width:1px;height:558px;background:#6a6a6a;"></div>
<div style="left:713px;top:0px;width:1px;height:558px;background:#8a8a8a;"></div>
<div style="left:0px;top:0px;width:714px;height:1px;background:#6a6a6a;"></div>
</div></body></html>
